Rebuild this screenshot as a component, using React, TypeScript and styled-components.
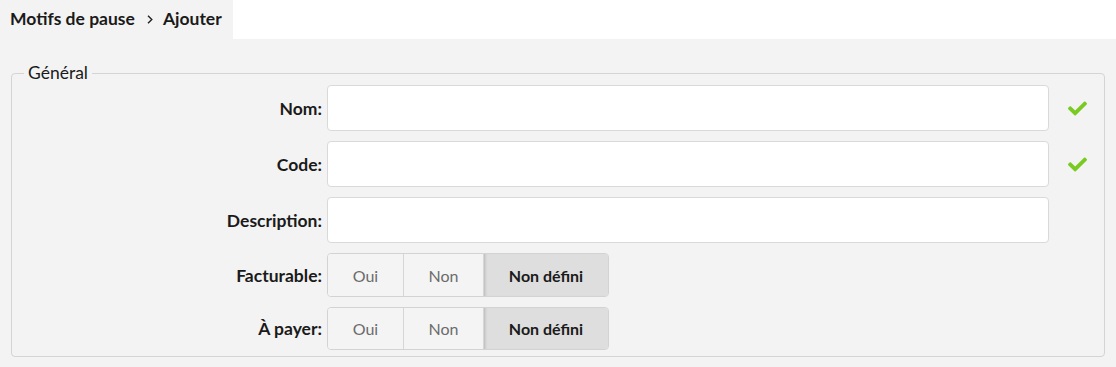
import React from "react";
import styled, { createGlobalStyle } from "styled-components";
import { FaCheck } from "react-icons/fa";

const Global = createGlobalStyle`
  html, body { margin: 0; padding: 0; background: #ffffff; }
  body { font-family: Lato, "Open Sans", Arial, sans-serif; color: #111; }
  * { box-sizing: border-box; }
`;

const Page = styled.div`
  width: 1116px;
  height: 367px;
  display: flex;
  flex-direction: column;
  background: #ffffff;
`;

const Header = styled.div`
  height: 39px;
  display: flex;
`;

const Crumbs = styled.div`
  width: 233px;
  background: #f3f3f3;
  display: flex;
  align-items: center;
  padding: 0 0 3px 10px;
  font-size: 17.5px;
  font-weight: 700;
  color: #1a1a1a;
`;

const Sep = styled.svg`
  width: 6px;
  height: 9px;
  margin: 2px 10px 0 12px;
  flex: none;
`;

const Main = styled.div`
  flex: 1;
  background: #f3f3f3;
  padding: 24px 11px 0 11px;
`;

const Fieldset = styled.fieldset`
  margin: 0;
  padding: 2px 0 6px 0;
  border: 1px solid #d4d4d4;
  border-radius: 4px;
  min-width: 0;
`;

const Legend = styled.legend`
  margin-left: 12px;
  padding: 0 4px;
  font-size: 17.5px;
  line-height: 20px;
  color: #1a1a1a;
`;

const Grid = styled.div`
  display: grid;
  grid-template-columns: 310px 722px 1fr;
  column-gap: 5px;
  row-gap: 10px;
  align-items: center;
`;

const Label = styled.label`
  text-align: right;
  font-size: 17.5px;
  font-weight: 700;
  color: #1a1a1a;
`;

const Input = styled.input`
  height: 46px;
  width: 100%;
  border: 1px solid #d9d9d9;
  border-radius: 4px;
  background: #fff;
  outline: none;
  font-family: inherit;
  font-size: 15px;
  padding: 0 10px;
`;

const Status = styled.div`
  padding-left: 14px;
  display: flex;
  align-items: center;
  color: #79cb22;
  font-size: 19px;
`;

const Toggle = styled.div<{ $h: number }>`
  display: flex;
  width: 282px;
  height: ${(p) => p.$h}px;
  border: 1px solid #d3d3d3;
  border-radius: 4px;
  overflow: hidden;
  background: #f4f4f4;
`;

const Opt = styled.button<{ $w: number; $active?: boolean }>`
  width: ${(p) => p.$w}px;
  flex: none;
  border: none;
  border-left: 1px solid #d6d6d6;
  &:first-child { border-left: none; }
  background: ${(p) => (p.$active ? "#dedede" : "#f4f4f4")};
  box-shadow: ${(p) => (p.$active ? "inset 3px 0 3px -2px rgba(0,0,0,0.18)" : "none")};
  font-family: inherit;
  font-size: 16px;
  font-weight: ${(p) => (p.$active ? 700 : 400)};
  color: ${(p) => (p.$active ? "#1a1a1a" : "#6b6b6b")};
  padding: 0;
  cursor: pointer;
`;

const Empty = styled.div``;

function ToggleRow({ label, h }: { label: string; h: number }) {
  return (
    <>
      <Label>{label}</Label>
      <div>
        <Toggle $h={h}>
          <Opt $w={75}>Oui</Opt>
          <Opt $w={80}>Non</Opt>
          <Opt $w={125} $active>
            Non défini
          </Opt>
        </Toggle>
      </div>
      <Empty />
    </>
  );
}

export default function App() {
  return (
    <Page>
      <Global />
      <Header>
        <Crumbs>
          <span>Motifs de pause</span>
          <Sep viewBox="0 0 6 9">
            <path d="M1 0.8 L4.8 4.5 L1 8.2" fill="none" stroke="#222" strokeWidth="1.4" />
          </Sep>
          <span>Ajouter</span>
        </Crumbs>
      </Header>
      <Main>
        <Fieldset>
          <Legend>Général</Legend>
          <Grid>
            <Label>Nom:</Label>
            <Input />
            <Status>
              <FaCheck />
            </Status>
            <Label>Code:</Label>
            <Input />
            <Status>
              <FaCheck />
            </Status>
            <Label>Description:</Label>
            <Input />
            <Empty />
            <ToggleRow label="Facturable:" h={44} />
            <ToggleRow label="À payer:" h={43} />
          </Grid>
        </Fieldset>
      </Main>
    </Page>
  );
}
